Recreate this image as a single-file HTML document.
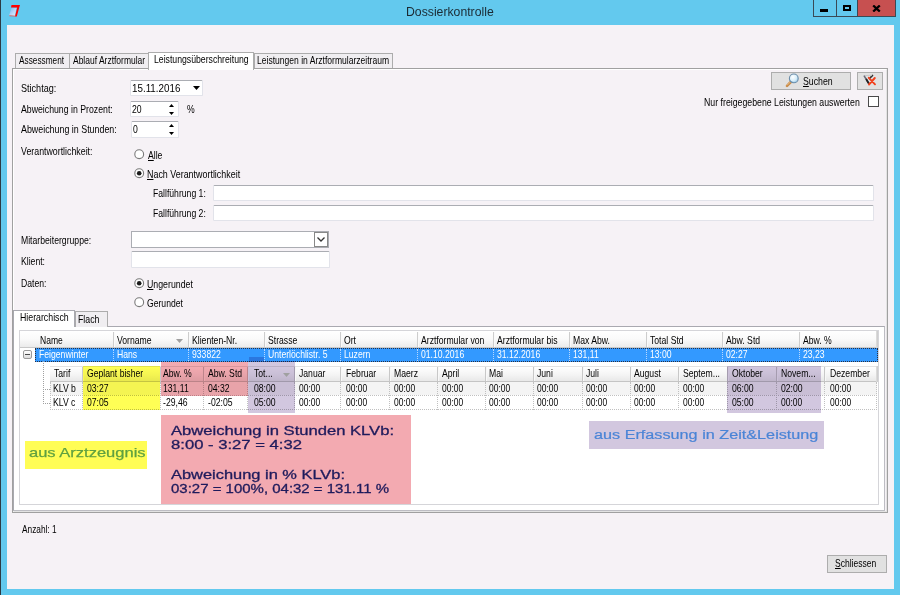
<!DOCTYPE html>
<html><head><meta charset="utf-8"><style>
html,body{margin:0;padding:0}
body{width:900px;height:595px;position:relative;overflow:hidden;background:#63c9ee;font-family:"Liberation Sans",sans-serif}
body>div,body>span{position:absolute}
.t{white-space:pre;transform-origin:0 0;font-family:"Liberation Sans",sans-serif}
u{text-decoration:underline}
</style></head><body>
<div style="left:0px;top:0px;width:1px;height:595px;background:#2c3b44"></div>
<svg style="position:absolute;left:8px;top:4px" width="14" height="14" viewBox="0 0 14 14">
<defs><linearGradient id="lg" x1="0" y1="0" x2="1" y2="1"><stop offset="0" stop-color="#7fb3f0"/><stop offset="1" stop-color="#e8f4ff"/></linearGradient></defs>
<polygon points="3.5,4 8.5,4 6.8,12 1,11.5" fill="url(#lg)"/>
<polygon points="3.5,1 12,1 11.3,3.3 8.8,12.5 7,12.5 9.2,3.4 3,3.4" fill="#f00"/>
<polygon points="1.2,11.3 7.5,11.8 7.2,12.6 1.5,12.2" fill="#e06060"/>
</svg>
<span class="t" style="left:406px;top:5px;font-size:12px;line-height:14px;color:#1b2a33;transform:scaleX(1.0200);">Dossierkontrolle</span>
<div style="left:813px;top:0px;width:25px;height:17px;background:#63c9ee;border:1px solid #3a4a55;border-top:none;box-sizing:border-box"></div>
<div style="left:837px;top:0px;width:21px;height:17px;background:#63c9ee;border:1px solid #3a4a55;border-top:none;border-left:none;box-sizing:border-box"></div>
<div style="left:857px;top:0px;width:39px;height:17px;background:#c75050;border:1px solid #3a4a55;border-top:none;border-left:none;box-sizing:border-box"></div>
<div style="left:836px;top:0px;width:1px;height:17px;background:#3a4a55"></div>
<div style="left:857px;top:0px;width:1px;height:17px;background:#3a4a55"></div>
<div style="left:820px;top:9px;width:8px;height:3px;background:#000"></div>
<div style="left:843px;top:5px;width:8px;height:6px;border:2px solid #000;box-sizing:border-box"></div>
<svg style="position:absolute;left:872px;top:5px" width="9" height="7" viewBox="0 0 9 7"><path d="M1.2,0.5 L7.8,6.5 M7.8,0.5 L1.2,6.5" stroke="#000" stroke-width="2.3"/></svg>
<div style="left:7px;top:25px;width:887px;height:564px;background:#f6f2f6"></div>
<div style="left:12px;top:68px;width:876px;height:445px;border:1px solid #a0a0a0;box-sizing:border-box"></div>
<div style="left:13px;top:69px;width:874px;height:443px;border:1px solid #fff;border-right-color:#e3e3e3;border-bottom-color:#e3e3e3;box-sizing:border-box"></div>
<div style="left:15px;top:53px;width:55px;height:15px;background:#f0eef1;border:1px solid #acacac;border-bottom:none;box-sizing:border-box"></div>
<div style="left:69px;top:53px;width:80px;height:15px;background:#f0eef1;border:1px solid #acacac;border-bottom:none;box-sizing:border-box"></div>
<div style="left:254px;top:53px;width:139px;height:15px;background:#f0eef1;border:1px solid #acacac;border-bottom:none;box-sizing:border-box"></div>
<div style="left:148px;top:52px;width:106px;height:18px;background:#fff;border:1px solid #acacac;border-bottom:none;box-sizing:border-box"></div>
<span class="t" style="left:19px;top:54px;font-size:11px;line-height:13px;color:#000;transform:scaleX(0.7520);">Assessment</span>
<span class="t" style="left:73px;top:54px;font-size:11px;line-height:13px;color:#000;transform:scaleX(0.7710);">Ablauf Arztformular</span>
<span class="t" style="left:154px;top:53px;font-size:11px;line-height:13px;color:#000;transform:scaleX(0.7900);">Leistungsüberschreitung</span>
<span class="t" style="left:257px;top:54px;font-size:11px;line-height:13px;color:#000;transform:scaleX(0.7770);">Leistungen in Arztformularzeitraum</span>
<span class="t" style="left:21px;top:82px;font-size:11px;line-height:13px;color:#000;transform:scaleX(0.8240);">Stichtag:</span>
<span class="t" style="left:21px;top:103px;font-size:11px;line-height:13px;color:#000;transform:scaleX(0.7940);">Abweichung in Prozent:</span>
<span class="t" style="left:21px;top:123px;font-size:11px;line-height:13px;color:#000;transform:scaleX(0.8070);">Abweichung in Stunden:</span>
<div style="left:130px;top:80px;width:73px;height:16px;background:#fff;border:1px solid #e2e3ea;border-top-color:#abadb3;border-radius:1.5px;box-sizing:border-box"></div>
<span class="t" style="left:132px;top:82px;font-size:11px;line-height:13px;color:#000;transform:scaleX(0.8920);">15.11.2016</span>
<svg style="position:absolute;left:193px;top:86px" width="7" height="4"><polygon points="0,0 7,0 3.5,4" fill="#000"/></svg>
<div style="left:130px;top:101px;width:49px;height:16px;background:#fff;border:1px solid #e2e3ea;border-top-color:#abadb3;border-radius:1.5px;box-sizing:border-box"></div>
<span class="t" style="left:132px;top:103px;font-size:11px;line-height:13px;color:#000;transform:scaleX(0.7850);">20</span>
<svg style="position:absolute;left:169px;top:104px" width="6" height="11"><polygon points="0,3 5,3 2.5,0" fill="#000"/><polygon points="0,8 5,8 2.5,11" fill="#000"/></svg>
<span class="t" style="left:187px;top:103px;font-size:11px;line-height:13px;color:#000;transform:scaleX(0.7850);">%</span>
<div style="left:131px;top:121px;width:48px;height:17px;background:#fff;border:1px solid #e2e3ea;border-top-color:#abadb3;border-radius:1.5px;box-sizing:border-box"></div>
<span class="t" style="left:133px;top:123px;font-size:11px;line-height:13px;color:#000;transform:scaleX(0.7850);">0</span>
<svg style="position:absolute;left:169px;top:124px" width="6" height="11"><polygon points="0,3 5,3 2.5,0" fill="#000"/><polygon points="0,8 5,8 2.5,11" fill="#000"/></svg>
<div style="left:771px;top:72px;width:80px;height:18px;background:#e1e1e1;border:1px solid #adadad;box-sizing:border-box"></div>
<div style="left:857px;top:72px;width:26px;height:18px;background:#e1e1e1;border:1px solid #adadad;box-sizing:border-box"></div>
<svg style="position:absolute;left:784px;top:72px" width="16" height="16" viewBox="0 0 16 16">
<defs><radialGradient id="lens" cx="0.4" cy="0.35" r="0.7"><stop offset="0" stop-color="#ffffff"/><stop offset="0.6" stop-color="#d8eefa"/><stop offset="1" stop-color="#8cc4e8"/></radialGradient></defs>
<line x1="3" y1="13.8" x2="6.8" y2="10" stroke="#c88a48" stroke-width="2.6" stroke-linecap="round"/>
<line x1="3.3" y1="13" x2="6.2" y2="10.1" stroke="#f0c890" stroke-width="0.8" stroke-linecap="round"/>
<circle cx="9.8" cy="6.4" r="4.4" fill="url(#lens)" stroke="#6d8eaa" stroke-width="1.1"/>
</svg>
<span class="t" style="left:803px;top:75px;font-size:11px;line-height:13px;color:#000;transform:scaleX(0.7950);"><u>S</u>uchen</span>
<svg style="position:absolute;left:858px;top:72px" width="24" height="18" viewBox="0 0 24 18">
<path d="M6.3,4.2 L10.3,10.8" stroke="#6a6a78" stroke-width="1.6" stroke-linecap="round"/>
<path d="M8.5,7.5 L10.5,11" stroke="#222" stroke-width="1.8" stroke-linecap="round"/>
<path d="M14.5,3.5 L11.5,6.5" stroke="#333" stroke-width="1.7" stroke-linecap="round"/>
<path d="M7,3.6 L14,3.2" stroke="#c8c8c8" stroke-width="1"/>
<path d="M10.8,5.8 L17,12.3 M16.8,6 L11,12.5" stroke="#f2401c" stroke-width="1.9" stroke-linecap="round"/>
</svg>
<span class="t" style="left:704px;top:96px;font-size:11px;line-height:13px;color:#000;transform:scaleX(0.7960);">Nur freigegebene Leistungen auswerten</span>
<div style="left:868px;top:96px;width:11px;height:11px;background:#fff;border:1px solid #4a4a4a;box-sizing:border-box"></div>
<span class="t" style="left:21px;top:145px;font-size:11px;line-height:13px;color:#000;transform:scaleX(0.8010);">Verantwortlichkeit:</span>
<svg style="position:absolute;left:134px;top:149px" width="11" height="11" viewBox="0 0 11 11"><circle cx="5.2" cy="5.2" r="4.4" fill="#fff" stroke="#7a7a7a" stroke-width="1.1"/></svg>
<span class="t" style="left:148px;top:149px;font-size:11px;line-height:13px;color:#000;transform:scaleX(0.7850);"><u>A</u>lle</span>
<svg style="position:absolute;left:134px;top:167.5px" width="11" height="11" viewBox="0 0 11 11"><circle cx="5.2" cy="5.2" r="4.4" fill="#fff" stroke="#7a7a7a" stroke-width="1.1"/><circle cx="5.2" cy="5.2" r="2.3" fill="#1a1a1a"/></svg>
<span class="t" style="left:147px;top:168px;font-size:11px;line-height:13px;color:#000;transform:scaleX(0.8100);"><u>N</u>ach Verantwortlichkeit</span>
<span class="t" style="left:153px;top:187px;font-size:11px;line-height:13px;color:#000;transform:scaleX(0.7850);">Fallführung 1:</span>
<span class="t" style="left:153px;top:207px;font-size:11px;line-height:13px;color:#000;transform:scaleX(0.7850);">Fallführung 2:</span>
<div style="left:213px;top:185px;width:661px;height:16px;background:#fff;border:1px solid #e2e3ea;border-top-color:#abadb3;border-radius:1.5px;box-sizing:border-box"></div>
<div style="left:213px;top:205px;width:661px;height:16px;background:#fff;border:1px solid #e2e3ea;border-top-color:#abadb3;border-radius:1.5px;box-sizing:border-box"></div>
<span class="t" style="left:21px;top:234px;font-size:11px;line-height:13px;color:#000;transform:scaleX(0.7860);">Mitarbeitergruppe:</span>
<div style="left:131px;top:231px;width:198px;height:17px;background:#fff;border:1px solid #abadb3;box-sizing:border-box"></div>
<div style="left:314px;top:232px;width:14px;height:15px;background:#fff;border:1px solid #888;box-sizing:border-box"></div>
<svg style="position:absolute;left:317px;top:237px" width="8" height="5"><path d="M0.5,0.5 L4,4 L7.5,0.5" stroke="#333" stroke-width="1.3" fill="none"/></svg>
<span class="t" style="left:21px;top:255px;font-size:11px;line-height:13px;color:#000;transform:scaleX(0.7850);">Klient:</span>
<div style="left:131px;top:251px;width:199px;height:17px;background:#fff;border:1px solid #e2e3ea;border-top-color:#abadb3;border-radius:1.5px;box-sizing:border-box"></div>
<span class="t" style="left:21px;top:277px;font-size:11px;line-height:13px;color:#000;transform:scaleX(0.7850);">Daten:</span>
<svg style="position:absolute;left:133.5px;top:278px" width="11" height="11" viewBox="0 0 11 11"><circle cx="5.2" cy="5.2" r="4.4" fill="#fff" stroke="#7a7a7a" stroke-width="1.1"/><circle cx="5.2" cy="5.2" r="2.3" fill="#1a1a1a"/></svg>
<span class="t" style="left:147px;top:278px;font-size:11px;line-height:13px;color:#000;transform:scaleX(0.7980);"><u>U</u>ngerundet</span>
<svg style="position:absolute;left:133.5px;top:297px" width="11" height="11" viewBox="0 0 11 11"><circle cx="5.2" cy="5.2" r="4.4" fill="#fff" stroke="#7a7a7a" stroke-width="1.1"/></svg>
<span class="t" style="left:147px;top:297px;font-size:11px;line-height:13px;color:#000;transform:scaleX(0.7830);">Gerundet</span>
<div style="left:13px;top:326px;width:872px;height:185px;border:1px solid #a9a9b0;border-right-color:#bdbdc3;border-bottom-color:#bdbdc3;box-sizing:border-box;background:#fff"></div>
<div style="left:75px;top:311px;width:33px;height:16px;background:#f0eef1;border:1px solid #acacac;border-bottom:none;box-sizing:border-box"></div>
<div style="left:13px;top:310px;width:62px;height:17px;background:#fff;border:1px solid #a9a9b0;border-bottom:none;box-sizing:border-box"></div>
<span class="t" style="left:20px;top:311px;font-size:11px;line-height:13px;color:#000;transform:scaleX(0.7970);">Hierarchisch</span>
<span class="t" style="left:78px;top:313px;font-size:11px;line-height:13px;color:#000;transform:scaleX(0.7960);">Flach</span>
<div style="left:19px;top:330px;width:860px;height:175px;border:1px solid #d5d5d9;box-sizing:border-box;background:#fff"></div>
<div style="left:20px;top:331px;width:858px;height:17px;background:linear-gradient(#fff 0%,#fafafa 50%,#ebebeb 100%);border-bottom:1px solid #c8c8c8;box-sizing:border-box"></div>
<div style="left:113px;top:332px;width:1px;height:15px;background:#cdcdcd"></div>
<div style="left:114px;top:332px;width:1px;height:15px;background:#fafafa"></div>
<div style="left:188px;top:332px;width:1px;height:15px;background:#cdcdcd"></div>
<div style="left:189px;top:332px;width:1px;height:15px;background:#fafafa"></div>
<div style="left:264px;top:332px;width:1px;height:15px;background:#cdcdcd"></div>
<div style="left:265px;top:332px;width:1px;height:15px;background:#fafafa"></div>
<div style="left:340px;top:332px;width:1px;height:15px;background:#cdcdcd"></div>
<div style="left:341px;top:332px;width:1px;height:15px;background:#fafafa"></div>
<div style="left:417px;top:332px;width:1px;height:15px;background:#cdcdcd"></div>
<div style="left:418px;top:332px;width:1px;height:15px;background:#fafafa"></div>
<div style="left:493px;top:332px;width:1px;height:15px;background:#cdcdcd"></div>
<div style="left:494px;top:332px;width:1px;height:15px;background:#fafafa"></div>
<div style="left:569px;top:332px;width:1px;height:15px;background:#cdcdcd"></div>
<div style="left:570px;top:332px;width:1px;height:15px;background:#fafafa"></div>
<div style="left:646px;top:332px;width:1px;height:15px;background:#cdcdcd"></div>
<div style="left:647px;top:332px;width:1px;height:15px;background:#fafafa"></div>
<div style="left:722px;top:332px;width:1px;height:15px;background:#cdcdcd"></div>
<div style="left:723px;top:332px;width:1px;height:15px;background:#fafafa"></div>
<div style="left:799px;top:332px;width:1px;height:15px;background:#cdcdcd"></div>
<div style="left:800px;top:332px;width:1px;height:15px;background:#fafafa"></div>
<div style="left:876px;top:331px;width:2px;height:17px;background:linear-gradient(90deg,#e0e0e0,#c8c8c8)"></div>
<div style="left:35px;top:348px;width:843px;height:14px;background:#3399ff;border:1px dotted #2a3040;box-sizing:border-box"></div>
<span class="t" style="left:39.5px;top:334px;font-size:11px;line-height:13px;color:#000;transform:scaleX(0.7750);">Name</span>
<span class="t" style="left:38.5px;top:348px;font-size:11px;line-height:13px;color:#fff;transform:scaleX(0.7850);">Feigenwinter</span>
<span class="t" style="left:117px;top:334px;font-size:11px;line-height:13px;color:#000;transform:scaleX(0.7850);">Vorname</span>
<span class="t" style="left:117px;top:348px;font-size:11px;line-height:13px;color:#fff;transform:scaleX(0.7850);">Hans</span>
<div style="left:113px;top:349px;width:1px;height:12px;border-left:1px dotted #b8d8ff"></div>
<span class="t" style="left:192px;top:334px;font-size:11px;line-height:13px;color:#000;transform:scaleX(0.7850);">Klienten-Nr.</span>
<span class="t" style="left:192px;top:348px;font-size:11px;line-height:13px;color:#fff;transform:scaleX(0.7850);">933822</span>
<div style="left:188px;top:349px;width:1px;height:12px;border-left:1px dotted #b8d8ff"></div>
<span class="t" style="left:268px;top:334px;font-size:11px;line-height:13px;color:#000;transform:scaleX(0.7850);">Strasse</span>
<span class="t" style="left:268px;top:348px;font-size:11px;line-height:13px;color:#fff;transform:scaleX(0.7850);">Unterlöchlistr. 5</span>
<div style="left:264px;top:349px;width:1px;height:12px;border-left:1px dotted #b8d8ff"></div>
<span class="t" style="left:344px;top:334px;font-size:11px;line-height:13px;color:#000;transform:scaleX(0.7850);">Ort</span>
<span class="t" style="left:344px;top:348px;font-size:11px;line-height:13px;color:#fff;transform:scaleX(0.7850);">Luzern</span>
<div style="left:340px;top:349px;width:1px;height:12px;border-left:1px dotted #b8d8ff"></div>
<span class="t" style="left:421px;top:334px;font-size:11px;line-height:13px;color:#000;transform:scaleX(0.7850);">Arztformular von</span>
<span class="t" style="left:421px;top:348px;font-size:11px;line-height:13px;color:#fff;transform:scaleX(0.7850);">01.10.2016</span>
<div style="left:417px;top:349px;width:1px;height:12px;border-left:1px dotted #b8d8ff"></div>
<span class="t" style="left:497px;top:334px;font-size:11px;line-height:13px;color:#000;transform:scaleX(0.7850);">Arztformular bis</span>
<span class="t" style="left:497px;top:348px;font-size:11px;line-height:13px;color:#fff;transform:scaleX(0.7850);">31.12.2016</span>
<div style="left:493px;top:349px;width:1px;height:12px;border-left:1px dotted #b8d8ff"></div>
<span class="t" style="left:573px;top:334px;font-size:11px;line-height:13px;color:#000;transform:scaleX(0.7850);">Max Abw.</span>
<span class="t" style="left:573px;top:348px;font-size:11px;line-height:13px;color:#fff;transform:scaleX(0.7850);">131,11</span>
<div style="left:569px;top:349px;width:1px;height:12px;border-left:1px dotted #b8d8ff"></div>
<span class="t" style="left:650px;top:334px;font-size:11px;line-height:13px;color:#000;transform:scaleX(0.7850);">Total Std</span>
<span class="t" style="left:650px;top:348px;font-size:11px;line-height:13px;color:#fff;transform:scaleX(0.7850);">13:00</span>
<div style="left:646px;top:349px;width:1px;height:12px;border-left:1px dotted #b8d8ff"></div>
<span class="t" style="left:726px;top:334px;font-size:11px;line-height:13px;color:#000;transform:scaleX(0.7850);">Abw. Std</span>
<span class="t" style="left:726px;top:348px;font-size:11px;line-height:13px;color:#fff;transform:scaleX(0.7850);">02:27</span>
<div style="left:722px;top:349px;width:1px;height:12px;border-left:1px dotted #b8d8ff"></div>
<span class="t" style="left:803px;top:334px;font-size:11px;line-height:13px;color:#000;transform:scaleX(0.7850);">Abw. %</span>
<span class="t" style="left:803px;top:348px;font-size:11px;line-height:13px;color:#fff;transform:scaleX(0.7850);">23,23</span>
<div style="left:799px;top:349px;width:1px;height:12px;border-left:1px dotted #b8d8ff"></div>
<div style="left:23px;top:350px;width:9px;height:9px;background:linear-gradient(#fff,#dcdcdc);border:1px solid #9a9a9a;border-radius:2px;box-sizing:border-box"></div>
<div style="left:25px;top:354px;width:5px;height:1px;background:#4a4a4a"></div>
<svg style="position:absolute;left:176px;top:339px" width="7" height="4"><polygon points="0,0 7,0 3.5,4" fill="#a0a0a0"/></svg>
<div style="left:43px;top:361px;width:1px;height:43px;border-left:1px dotted #a0a0a0"></div>
<div style="left:43px;top:389px;width:7px;height:1px;border-top:1px dotted #a0a0a0"></div>
<div style="left:43px;top:403px;width:7px;height:1px;border-top:1px dotted #a0a0a0"></div>
<div style="left:50px;top:366px;width:827px;height:16px;background:linear-gradient(#fff,#f3f3f3 60%,#e8e8e8);border-top:1px solid #e3e3e3;border-bottom:1px solid #c4c4c4;box-sizing:border-box"></div>
<div style="left:50px;top:382px;width:827px;height:13px;background:#f4f4f4"></div>
<div style="left:50px;top:396px;width:827px;height:14px;background:#fff"></div>
<div style="left:50px;top:382px;width:827px;height:28px;border:1px dotted #c0c0c0;border-top:none;box-sizing:border-box"></div>
<div style="left:50px;top:395px;width:827px;height:1px;border-top:1px dotted #c0c0c0"></div>
<div style="left:82px;top:367px;width:1px;height:14px;background:#c8c8c8"></div>
<div style="left:83px;top:367px;width:1px;height:14px;background:#f8f8f8"></div>
<div style="left:82px;top:382px;width:1px;height:28px;border-left:1px dotted #c0c0c0"></div>
<div style="left:160px;top:367px;width:1px;height:14px;background:#c8c8c8"></div>
<div style="left:161px;top:367px;width:1px;height:14px;background:#f8f8f8"></div>
<div style="left:160px;top:382px;width:1px;height:28px;border-left:1px dotted #c0c0c0"></div>
<div style="left:203px;top:367px;width:1px;height:14px;background:#c8c8c8"></div>
<div style="left:204px;top:367px;width:1px;height:14px;background:#f8f8f8"></div>
<div style="left:203px;top:382px;width:1px;height:28px;border-left:1px dotted #c0c0c0"></div>
<div style="left:247px;top:367px;width:1px;height:14px;background:#c8c8c8"></div>
<div style="left:248px;top:367px;width:1px;height:14px;background:#f8f8f8"></div>
<div style="left:247px;top:382px;width:1px;height:28px;border-left:1px dotted #c0c0c0"></div>
<div style="left:294px;top:367px;width:1px;height:14px;background:#c8c8c8"></div>
<div style="left:295px;top:367px;width:1px;height:14px;background:#f8f8f8"></div>
<div style="left:294px;top:382px;width:1px;height:28px;border-left:1px dotted #c0c0c0"></div>
<div style="left:340px;top:367px;width:1px;height:14px;background:#c8c8c8"></div>
<div style="left:341px;top:367px;width:1px;height:14px;background:#f8f8f8"></div>
<div style="left:340px;top:382px;width:1px;height:28px;border-left:1px dotted #c0c0c0"></div>
<div style="left:389px;top:367px;width:1px;height:14px;background:#c8c8c8"></div>
<div style="left:390px;top:367px;width:1px;height:14px;background:#f8f8f8"></div>
<div style="left:389px;top:382px;width:1px;height:28px;border-left:1px dotted #c0c0c0"></div>
<div style="left:437px;top:367px;width:1px;height:14px;background:#c8c8c8"></div>
<div style="left:438px;top:367px;width:1px;height:14px;background:#f8f8f8"></div>
<div style="left:437px;top:382px;width:1px;height:28px;border-left:1px dotted #c0c0c0"></div>
<div style="left:485px;top:367px;width:1px;height:14px;background:#c8c8c8"></div>
<div style="left:486px;top:367px;width:1px;height:14px;background:#f8f8f8"></div>
<div style="left:485px;top:382px;width:1px;height:28px;border-left:1px dotted #c0c0c0"></div>
<div style="left:533px;top:367px;width:1px;height:14px;background:#c8c8c8"></div>
<div style="left:534px;top:367px;width:1px;height:14px;background:#f8f8f8"></div>
<div style="left:533px;top:382px;width:1px;height:28px;border-left:1px dotted #c0c0c0"></div>
<div style="left:582px;top:367px;width:1px;height:14px;background:#c8c8c8"></div>
<div style="left:583px;top:367px;width:1px;height:14px;background:#f8f8f8"></div>
<div style="left:582px;top:382px;width:1px;height:28px;border-left:1px dotted #c0c0c0"></div>
<div style="left:630px;top:367px;width:1px;height:14px;background:#c8c8c8"></div>
<div style="left:631px;top:367px;width:1px;height:14px;background:#f8f8f8"></div>
<div style="left:630px;top:382px;width:1px;height:28px;border-left:1px dotted #c0c0c0"></div>
<div style="left:678px;top:367px;width:1px;height:14px;background:#c8c8c8"></div>
<div style="left:679px;top:367px;width:1px;height:14px;background:#f8f8f8"></div>
<div style="left:678px;top:382px;width:1px;height:28px;border-left:1px dotted #c0c0c0"></div>
<div style="left:727px;top:367px;width:1px;height:14px;background:#c8c8c8"></div>
<div style="left:728px;top:367px;width:1px;height:14px;background:#f8f8f8"></div>
<div style="left:727px;top:382px;width:1px;height:28px;border-left:1px dotted #c0c0c0"></div>
<div style="left:776px;top:367px;width:1px;height:14px;background:#c8c8c8"></div>
<div style="left:777px;top:367px;width:1px;height:14px;background:#f8f8f8"></div>
<div style="left:776px;top:382px;width:1px;height:28px;border-left:1px dotted #c0c0c0"></div>
<div style="left:824px;top:367px;width:1px;height:14px;background:#c8c8c8"></div>
<div style="left:825px;top:367px;width:1px;height:14px;background:#f8f8f8"></div>
<div style="left:824px;top:382px;width:1px;height:28px;border-left:1px dotted #c0c0c0"></div>
<div style="left:876px;top:366px;width:2px;height:16px;background:linear-gradient(90deg,#e0e0e0,#c8c8c8)"></div>
<div style="left:83px;top:366px;width:77px;height:44px;mix-blend-mode:multiply;background:#ffff55"></div>
<div style="left:161px;top:362px;width:87px;height:34px;mix-blend-mode:multiply;background:#f3aab1"></div>
<div style="left:249px;top:357px;width:15px;height:4px;mix-blend-mode:multiply;background:#d2c7df"></div>
<div style="left:248px;top:361px;width:47px;height:52px;mix-blend-mode:multiply;background:#d2c7df"></div>
<div style="left:727px;top:366px;width:94px;height:47px;mix-blend-mode:multiply;background:#d2c7df"></div>
<span class="t" style="left:54px;top:367px;font-size:11px;line-height:13px;color:#000;transform:scaleX(0.7850);">Tarif</span>
<span class="t" style="left:53px;top:382px;font-size:11px;line-height:13px;color:#000;transform:scaleX(0.7850);">KLV b</span>
<span class="t" style="left:53px;top:396px;font-size:11px;line-height:13px;color:#000;transform:scaleX(0.7850);">KLV c</span>
<span class="t" style="left:87px;top:367px;font-size:11px;line-height:13px;color:#000;transform:scaleX(0.7850);">Geplant bisher</span>
<span class="t" style="left:87px;top:382px;font-size:11px;line-height:13px;color:#000;transform:scaleX(0.7850);">03:27</span>
<span class="t" style="left:87px;top:396px;font-size:11px;line-height:13px;color:#000;transform:scaleX(0.7850);">07:05</span>
<span class="t" style="left:163px;top:367px;font-size:11px;line-height:13px;color:#000;transform:scaleX(0.7850);">Abw. %</span>
<span class="t" style="left:163px;top:382px;font-size:11px;line-height:13px;color:#000;transform:scaleX(0.7850);">131,11</span>
<span class="t" style="left:163px;top:396px;font-size:11px;line-height:13px;color:#000;transform:scaleX(0.7850);">-29,46</span>
<span class="t" style="left:208px;top:367px;font-size:11px;line-height:13px;color:#000;transform:scaleX(0.7850);">Abw. Std</span>
<span class="t" style="left:208px;top:382px;font-size:11px;line-height:13px;color:#000;transform:scaleX(0.7850);">04:32</span>
<span class="t" style="left:208px;top:396px;font-size:11px;line-height:13px;color:#000;transform:scaleX(0.7850);">-02:05</span>
<span class="t" style="left:254px;top:367px;font-size:11px;line-height:13px;color:#000;transform:scaleX(0.7850);">Tot...</span>
<span class="t" style="left:254px;top:382px;font-size:11px;line-height:13px;color:#000;transform:scaleX(0.7850);">08:00</span>
<span class="t" style="left:254px;top:396px;font-size:11px;line-height:13px;color:#000;transform:scaleX(0.7850);">05:00</span>
<span class="t" style="left:299px;top:367px;font-size:11px;line-height:13px;color:#000;transform:scaleX(0.7850);">Januar</span>
<span class="t" style="left:299px;top:382px;font-size:11px;line-height:13px;color:#000;transform:scaleX(0.7680);">00:00</span>
<span class="t" style="left:299px;top:396px;font-size:11px;line-height:13px;color:#000;transform:scaleX(0.7680);">00:00</span>
<span class="t" style="left:345.5px;top:367px;font-size:11px;line-height:13px;color:#000;transform:scaleX(0.7850);">Februar</span>
<span class="t" style="left:345.5px;top:382px;font-size:11px;line-height:13px;color:#000;transform:scaleX(0.7680);">00:00</span>
<span class="t" style="left:345.5px;top:396px;font-size:11px;line-height:13px;color:#000;transform:scaleX(0.7680);">00:00</span>
<span class="t" style="left:394px;top:367px;font-size:11px;line-height:13px;color:#000;transform:scaleX(0.7850);">Maerz</span>
<span class="t" style="left:394px;top:382px;font-size:11px;line-height:13px;color:#000;transform:scaleX(0.7680);">00:00</span>
<span class="t" style="left:394px;top:396px;font-size:11px;line-height:13px;color:#000;transform:scaleX(0.7680);">00:00</span>
<span class="t" style="left:442px;top:367px;font-size:11px;line-height:13px;color:#000;transform:scaleX(0.7850);">April</span>
<span class="t" style="left:442px;top:382px;font-size:11px;line-height:13px;color:#000;transform:scaleX(0.7680);">00:00</span>
<span class="t" style="left:442px;top:396px;font-size:11px;line-height:13px;color:#000;transform:scaleX(0.7680);">00:00</span>
<span class="t" style="left:489px;top:367px;font-size:11px;line-height:13px;color:#000;transform:scaleX(0.7850);">Mai</span>
<span class="t" style="left:489px;top:382px;font-size:11px;line-height:13px;color:#000;transform:scaleX(0.7680);">00:00</span>
<span class="t" style="left:489px;top:396px;font-size:11px;line-height:13px;color:#000;transform:scaleX(0.7680);">00:00</span>
<span class="t" style="left:537px;top:367px;font-size:11px;line-height:13px;color:#000;transform:scaleX(0.7850);">Juni</span>
<span class="t" style="left:537px;top:382px;font-size:11px;line-height:13px;color:#000;transform:scaleX(0.7680);">00:00</span>
<span class="t" style="left:537px;top:396px;font-size:11px;line-height:13px;color:#000;transform:scaleX(0.7680);">00:00</span>
<span class="t" style="left:586px;top:367px;font-size:11px;line-height:13px;color:#000;transform:scaleX(0.7850);">Juli</span>
<span class="t" style="left:586px;top:382px;font-size:11px;line-height:13px;color:#000;transform:scaleX(0.7680);">00:00</span>
<span class="t" style="left:586px;top:396px;font-size:11px;line-height:13px;color:#000;transform:scaleX(0.7680);">00:00</span>
<span class="t" style="left:634px;top:367px;font-size:11px;line-height:13px;color:#000;transform:scaleX(0.7850);">August</span>
<span class="t" style="left:634px;top:382px;font-size:11px;line-height:13px;color:#000;transform:scaleX(0.7680);">00:00</span>
<span class="t" style="left:634px;top:396px;font-size:11px;line-height:13px;color:#000;transform:scaleX(0.7680);">00:00</span>
<span class="t" style="left:683px;top:367px;font-size:11px;line-height:13px;color:#000;transform:scaleX(0.7850);">Septem...</span>
<span class="t" style="left:683px;top:382px;font-size:11px;line-height:13px;color:#000;transform:scaleX(0.7680);">00:00</span>
<span class="t" style="left:683px;top:396px;font-size:11px;line-height:13px;color:#000;transform:scaleX(0.7680);">00:00</span>
<span class="t" style="left:732px;top:367px;font-size:11px;line-height:13px;color:#000;transform:scaleX(0.7850);">Oktober</span>
<span class="t" style="left:732px;top:382px;font-size:11px;line-height:13px;color:#000;transform:scaleX(0.7850);">06:00</span>
<span class="t" style="left:732px;top:396px;font-size:11px;line-height:13px;color:#000;transform:scaleX(0.7850);">05:00</span>
<span class="t" style="left:781px;top:367px;font-size:11px;line-height:13px;color:#000;transform:scaleX(0.7850);">Novem...</span>
<span class="t" style="left:781px;top:382px;font-size:11px;line-height:13px;color:#000;transform:scaleX(0.7850);">02:00</span>
<span class="t" style="left:781px;top:396px;font-size:11px;line-height:13px;color:#000;transform:scaleX(0.7680);">00:00</span>
<span class="t" style="left:830px;top:367px;font-size:11px;line-height:13px;color:#000;transform:scaleX(0.7850);">Dezember</span>
<span class="t" style="left:830px;top:382px;font-size:11px;line-height:13px;color:#000;transform:scaleX(0.7680);">00:00</span>
<span class="t" style="left:830px;top:396px;font-size:11px;line-height:13px;color:#000;transform:scaleX(0.7680);">00:00</span>
<svg style="position:absolute;left:283px;top:373px" width="7" height="4"><polygon points="0,0 7,0 3.5,4" fill="#a0a0a0"/></svg>
<div style="left:25px;top:441px;width:122px;height:28px;background:#fffd55"></div>
<span class="t" style="left:29px;top:445px;font-size:13px;line-height:15px;color:#5fa040;transform:scaleX(1.2700);-webkit-text-stroke:0.25px #5fa040">aus Arztzeugnis</span>
<div style="left:161px;top:415px;width:250px;height:89px;background:#f3aab1"></div>
<span class="t" style="left:171px;top:424px;font-size:12.5px;line-height:15px;color:#1f1b5c;transform:scaleX(1.3278);-webkit-text-stroke:0.3px #1f1b5c">Abweichung in Stunden KLVb:</span>
<span class="t" style="left:171px;top:438px;font-size:12.5px;line-height:15px;color:#1f1b5c;transform:scaleX(1.3321);-webkit-text-stroke:0.3px #1f1b5c">8:00 - 3:27 = 4:32</span>
<span class="t" style="left:171px;top:468px;font-size:12.5px;line-height:15px;color:#1f1b5c;transform:scaleX(1.3132);-webkit-text-stroke:0.3px #1f1b5c">Abweichung in % KLVb:</span>
<span class="t" style="left:171px;top:482px;font-size:12.5px;line-height:15px;color:#1f1b5c;transform:scaleX(1.1986);-webkit-text-stroke:0.3px #1f1b5c">03:27 = 100%, 04:32 = 131.11 %</span>
<div style="left:589px;top:421px;width:235px;height:28px;background:#d2c7df"></div>
<span class="t" style="left:594px;top:428px;font-size:12.5px;line-height:15px;color:#4a84d6;transform:scaleX(1.2969);-webkit-text-stroke:0.2px #4a84d6">aus Erfassung in Zeit&amp;Leistung</span>
<span class="t" style="left:22px;top:523px;font-size:11px;line-height:13px;color:#000;transform:scaleX(0.7540);">Anzahl: 1</span>
<div style="left:827px;top:555px;width:60px;height:18px;background:#e1e1e1;border:1px solid #adadad;box-sizing:border-box"></div>
<span class="t" style="left:835px;top:557px;font-size:11px;line-height:13px;color:#000;transform:scaleX(0.7750);"><u>S</u>chliessen</span>
</body></html>
